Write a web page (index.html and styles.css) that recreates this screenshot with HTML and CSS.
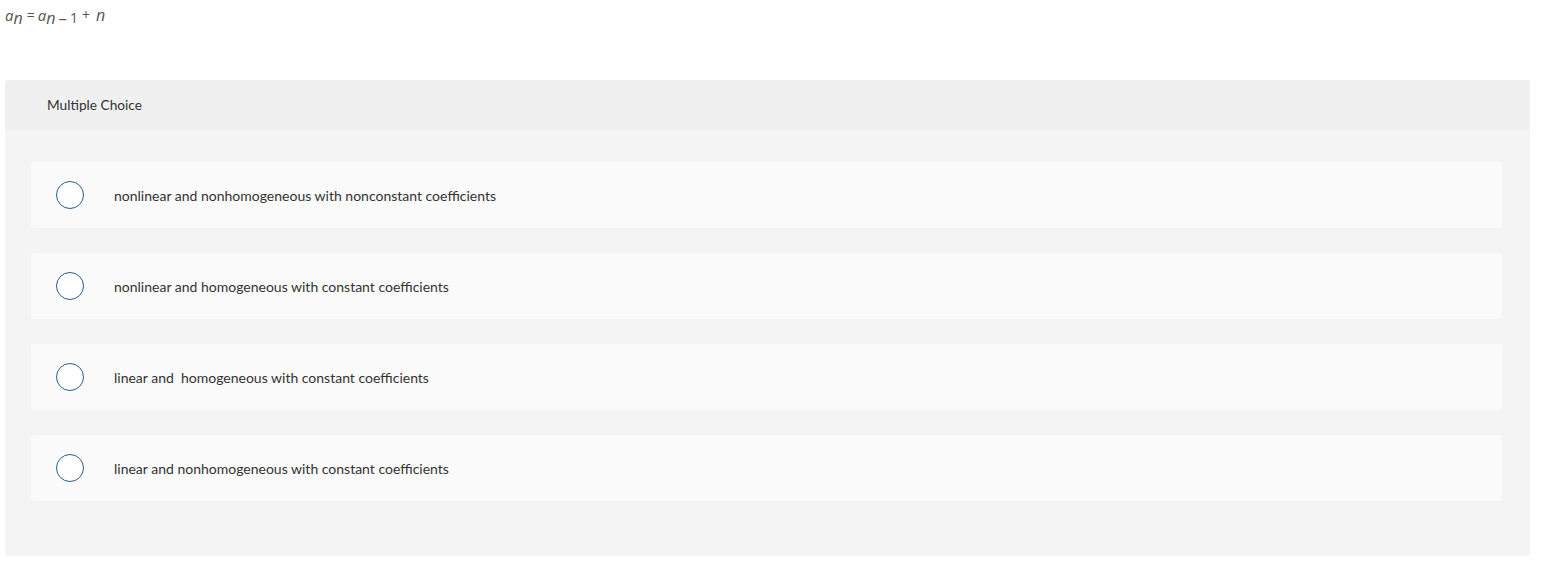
FILE: index.html
```html
<!DOCTYPE html>
<html>
<head>
<meta charset="utf-8">
<link rel="stylesheet" href="styles.css">
</head>
<body>
<div class="formula">
  <span class="v">a</span><span class="s">n</span><span class="op">=</span><span class="v">a</span><span class="s">n</span><span class="minus">–</span><span class="one">1</span><span class="plus">+</span><span class="v last">n</span>
</div>
<section class="mc">
  <header class="mc-head">Multiple Choice</header>
  <div class="mc-body">
    <label class="opt"><span class="radio"></span><span class="txt">nonlinear and nonhomogeneous with nonconstant coefficients</span></label>
    <label class="opt"><span class="radio"></span><span class="txt">nonlinear and homogeneous with constant coefficients</span></label>
    <label class="opt"><span class="radio"></span><span class="txt">linear and  homogeneous with constant coefficients</span></label>
    <label class="opt"><span class="radio"></span><span class="txt">linear and nonhomogeneous with constant coefficients</span></label>
  </div>
</section>
</body>
</html>
```
FILE: styles.css
```css
* { box-sizing: border-box; }
body {
  margin: 0;
  padding: 0 37px 0 5px;
  background: #fff;
  font-family: "Lato", "Open Sans", sans-serif;
  color: #333;
}
.formula {
  font-family: "Open Sans", "DejaVu Sans", sans-serif;
  color: #555;
  font-size: 15px;
  height: 80px;
  padding-top: 6px;
  line-height: 18px;
  white-space: nowrap;
}
.formula .v { font-style: italic; }
.formula .s {
  font-style: italic;
  font-size: 16px;
  position: relative;
  top: 3px;
}
.formula .op { margin: 0 3px 0 4px; font-size: 14px; position: relative; top: -1px; }
.formula .minus { margin: 0 3px 0 3px; position: relative; top: 3px; font-size: 17px; }
.formula .one { font-size: 14px; position: relative; top: 2px; }
.formula .plus { margin: 0 6px 0 4px; font-size: 14px; position: relative; top: -1px; }
.formula .last { font-size: 16px; }
.mc {
  background: #f4f4f4;
  border-radius: 3px;
  overflow: hidden;
}
.mc-head {
  background: #f0f0f0;
  height: 50px;
  padding-left: 42px;
  padding-bottom: 1px;
  display: flex;
  align-items: center;
  font-size: 13.7px;
  color: #333;
}
.mc-body {
  padding: 32px 28px 55px 26px;
  display: flex;
  flex-direction: column;
  gap: 25px;
}
.opt {
  background: #fafafa;
  border-radius: 3px;
  height: 66px;
  display: flex;
  align-items: center;
  padding-left: 25px;
}
.radio {
  width: 28px;
  height: 28px;
  border: 1.5px solid #2a5b92;
  border-radius: 50%;
  background: #fff;
  flex: none;
}
.txt {
  margin-left: 30px;
  font-size: 14px;
  color: #333;
  white-space: pre;
}
```
